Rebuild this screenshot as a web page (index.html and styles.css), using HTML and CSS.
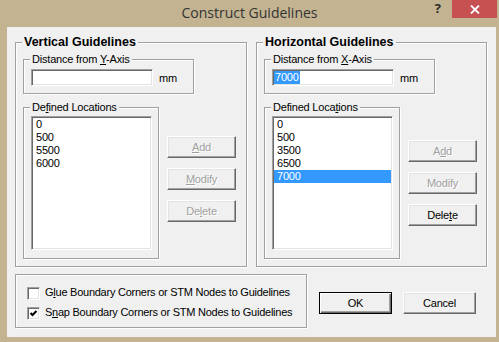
FILE: index.html
```html
<!DOCTYPE html>
<html>
<head>
    <title>Construct Guidelines</title>
    <link rel="stylesheet" href="styles.css">
</head>
<body>
    <div class="window">
        <div class="titlebar">
            <div></div>
            <div class="title">Construct Guidelines</div>
            <div class="caption-btns">
                <span class="help">?</span>
                <span class="close">
                    <svg width="10" height="9" viewBox="0 0 10 9"><path d="M1 0.5 L9 8.5 M9 0.5 L1 8.5" stroke="#fff" stroke-width="1.8" fill="none"/></svg>
                </span>
            </div>
        </div>
        <div class="client">
            <div class="top-row">
                <div class="group outer vert">
                    <div class="group-label bold">Vertical Guidelines</div>
                    <div class="group dist">
                        <div class="group-label">Distance from <u>Y</u>-Axis</div>
                        <div class="field-row">
                            <div class="edit"></div>
                            <span class="unit">mm</span>
                        </div>
                    </div>
                    <div class="loc-row">
                        <div class="group locs">
                            <div class="group-label">De<u>f</u>ined Locations</div>
                            <div class="listbox">
                                <div class="item">0</div>
                                <div class="item">500</div>
                                <div class="item">5500</div>
                                <div class="item">6000</div>
                            </div>
                        </div>
                        <div class="btn-col">
                            <div class="btn disabled"><u>A</u>dd</div>
                            <div class="btn disabled"><u>M</u>odify</div>
                            <div class="btn disabled">De<u>l</u>ete</div>
                        </div>
                    </div>
                </div>
                <div class="group outer horiz">
                    <div class="group-label bold">Horizontal Guidelines</div>
                    <div class="group dist">
                        <div class="group-label">Distance from <u>X</u>-Axis</div>
                        <div class="field-row">
                            <div class="edit"><span class="sel">7000</span></div>
                            <span class="unit">mm</span>
                        </div>
                    </div>
                    <div class="loc-row">
                        <div class="group locs">
                            <div class="group-label">Defined Loca<u>t</u>ions</div>
                            <div class="listbox">
                                <div class="item">0</div>
                                <div class="item">500</div>
                                <div class="item">3500</div>
                                <div class="item">6500</div>
                                <div class="item selected">7000</div>
                            </div>
                        </div>
                        <div class="btn-col">
                            <div class="btn disabled">A<u>d</u>d</div>
                            <div class="btn disabled">Modify</div>
                            <div class="btn">Dele<u>t</u>e</div>
                        </div>
                    </div>
                </div>
            </div>
            <div class="bottom-row">
                <div class="group options">
                    <div class="check">
                        <span class="box"></span>
                        <span>G<u>l</u>ue Boundary Corners or STM Nodes to Guidelines</span>
                    </div>
                    <div class="check">
                        <span class="box">
                            <svg width="9" height="9" viewBox="0 0 9 9"><path d="M1.5 4 L3.5 6 L7.5 2" stroke="#000" stroke-width="2" fill="none"/></svg>
                        </span>
                        <span>S<u>n</u>ap Boundary Corners or STM Nodes to Guidelines</span>
                    </div>
                </div>
                <div class="btn default">OK</div>
                <div class="btn cancel">Cancel</div>
            </div>
        </div>
    </div>
</body>
</html>
```
FILE: styles.css
```css
body {
    margin: 0;
    background: #c3b391;
    font-family: "Liberation Sans", Arial, sans-serif;
    font-size: 11px;
    letter-spacing: -0.2px;
    color: #000;
}
.window {
    width: 499px;
    height: 342px;
}
.titlebar {
    height: 27px;
    display: grid;
    grid-template-columns: 1fr auto 1fr;
}
.title {
    font-family: "Open Sans", sans-serif;
    font-size: 14px;
    line-height: 25px;
    letter-spacing: 0;
    color: #333;
}
.caption-btns {
    display: flex;
    justify-content: flex-end;
    align-items: flex-start;
}
.help {
    font-family: "Open Sans", sans-serif;
    font-weight: bold;
    font-size: 13px;
    line-height: 16px;
    letter-spacing: 0;
    color: #2b2b2b;
    margin-right: 11px;
}
.close {
    width: 45px;
    height: 18px;
    margin-right: 2px;
    background: #c75050;
    display: flex;
    align-items: center;
    justify-content: center;
}
.client {
    margin-left: 7px;
    width: 489px;
    height: 310px;
    box-sizing: border-box;
    padding: 15px 0 0 8px;
    background: #f0f0f0;
}
.top-row {
    display: flex;
    gap: 9px;
    align-items: flex-start;
}
.group {
    border: 1px solid #a0a0a0;
    box-shadow: 1px 1px 0 #fff, inset 1px 1px 0 #fff;
    padding: 0 0 0 7px;
}
.group-label {
    display: table;
    margin: -7px 0 0 -1px;
    padding: 0 2px;
    line-height: 13px;
    background: #f0f0f0;
}
.group-label.bold {
    font-weight: bold;
    font-size: 12.5px;
    letter-spacing: 0;
    line-height: 14px;
    margin-top: -8px;
}
u {
    text-underline-offset: 1px;
}
.outer {
    padding-bottom: 7px;
}
.vert {
    width: 232px;
    box-sizing: border-box;
}
.horiz {
    width: 231px;
    box-sizing: border-box;
}
.dist {
    width: 171px;
    box-sizing: border-box;
    margin-top: 10px;
    padding-bottom: 7px;
}
.field-row {
    display: flex;
    align-items: center;
    margin-top: 3px;
}
.edit, .listbox {
    background: #fff;
    border: 1px solid;
    border-color: #a0a0a0 #fff #fff #a0a0a0;
    box-shadow: inset 1px 1px 0 #696969, inset -1px -1px 0 #e3e3e3;
    box-sizing: border-box;
}
.edit {
    width: 122px;
    height: 17px;
    padding: 1px 0 0 1px;
    line-height: 13px;
}
.sel {
    display: inline-block;
    background: #3399ff;
    color: #fff;
    padding: 0 1px;
}
.unit {
    margin-left: 6px;
}
.loc-row {
    display: flex;
    align-items: flex-start;
    margin-top: 13px;
}
.locs {
    width: 136px;
    box-sizing: border-box;
    padding-bottom: 8px;
}
.listbox {
    width: 121px;
    height: 134px;
    margin-top: 2px;
    padding: 1px 1px;
}
.item {
    height: 13px;
    line-height: 13px;
    padding-left: 3px;
}
.item.selected {
    background: #3399ff;
    color: #fff;
}
.btn-col {
    display: flex;
    flex-direction: column;
    gap: 10px;
    margin: 29px 0 0 8px;
}
.horiz .btn-col {
    margin-top: 33px;
}
.btn {
    width: 69px;
    height: 22px;
    box-sizing: border-box;
    display: flex;
    align-items: center;
    justify-content: center;
    line-height: 13px;
    background: #f0f0f0;
    border: 1px solid;
    border-color: #fff #696969 #696969 #fff;
    box-shadow: inset -1px -1px 0 #a0a0a0, inset 1px 1px 0 #e3e3e3;
}
.btn.disabled {
    color: #a0a0a0;
    text-shadow: 1px 1px 0 #fff;
}
.bottom-row {
    display: flex;
    align-items: flex-start;
    margin-top: 7px;
}
.options {
    width: 292px;
    height: 54px;
    box-sizing: border-box;
    padding: 12px 0 0 11px;
    display: flex;
    flex-direction: column;
    gap: 7px;
}
.check {
    display: flex;
    align-items: flex-start;
    height: 13px;
    line-height: 11px;
    letter-spacing: -0.25px;
}
.box {
    width: 13px;
    height: 13px;
    box-sizing: border-box;
    background: #fff;
    border: 1px solid;
    border-color: #a0a0a0 #fff #fff #a0a0a0;
    box-shadow: inset 1px 1px 0 #696969, inset -1px -1px 0 #e3e3e3;
    margin-right: 5px;
    display: flex;
    align-items: center;
    justify-content: center;
    flex: none;
}
.btn.default {
    width: 73px;
    margin: 18px 0 0 12px;
    border-color: #000;
    box-shadow: inset 1px 1px 0 #fff, inset -1px -1px 0 #696969, inset -2px -2px 0 #a0a0a0;
}
.btn.cancel {
    width: 73px;
    margin: 18px 0 0 11px;
}
```
